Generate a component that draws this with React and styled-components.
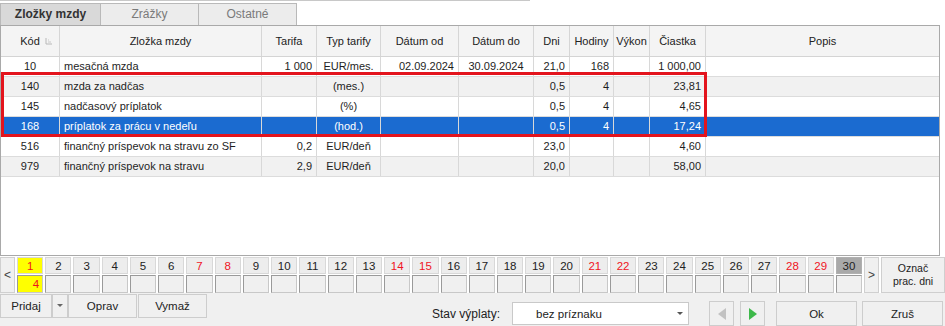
import React from "react";
import styled, { createGlobalStyle, css } from "styled-components";

const GlobalStyle = createGlobalStyle`
  html, body {
    margin: 0;
    padding: 0;
    background: #ffffff;
  }
  body {
    font-family: "Liberation Sans", Arial, sans-serif;
    font-size: 11px;
    color: #1e1e1e;
  }
`;

const Page = styled.div`
  position: relative;
  width: 945px;
  height: 326px;
  overflow: hidden;
  display: flex;
  flex-direction: column;
  background: #ffffff;
`;

// ---------- tabs ----------
const TabBar = styled.div`
  display: flex;
  height: 25px;
  padding-top: 2px;
  box-sizing: border-box;
  border-top: 1px solid #c8c8c8;
  width: 530px;
`;

const Tab = styled.div`
  width: ${(p) => p.$w}px;
  display: flex;
  align-items: center;
  justify-content: center;
  box-sizing: border-box;
  border: 1px solid #b9b9b9;
  border-bottom: none;
  margin-right: -1px;
  font-size: 12px;
  ${(p) =>
    p.$active
      ? css`
          background: #d9d9d9;
          font-weight: bold;
          color: #333;
        `
      : css`
          background: #ececec;
          color: #7a7a7a;
        `}
`;

// ---------- grid ----------
const cols = "59px 202px 55px 64px 78px 75px 36px 44px 36px 56px 1fr";

const Grid = styled.div`
  width: 940px;
  height: 233px;
  box-sizing: border-box;
  border: 1px solid #a9a9a9;
  background: #fff;
  display: flex;
  flex-direction: column;
`;

const HeaderRow = styled.div`
  display: grid;
  grid-template-columns: ${cols};
  height: 30px;
  background: #f4f4f4;
  border-bottom: 1px solid #d4d4d4;
`;

const HeadCell = styled.div`
  position: relative;
  display: flex;
  align-items: center;
  justify-content: center;
  border-right: 1px solid #d6d6d6;
  color: #222;
  &:last-child {
    border-right: none;
  }
`;

const SortMark = styled.svg`
  position: absolute;
  right: 6px;
  top: 11px;
`;

const Row = styled.div`
  display: grid;
  grid-template-columns: ${cols};
  height: 20px;
  box-sizing: border-box;
  border-bottom: 1px solid #dcdcdc;
  background: ${(p) => (p.$selected ? "#1b6bd0" : p.$alt ? "#f1f1f1" : "#fff")};
  color: ${(p) => (p.$selected ? "#fff" : "#1e1e1e")};
`;

const Cell = styled.div`
  display: flex;
  align-items: center;
  justify-content: ${(p) =>
    p.$align === "right" ? "flex-end" : p.$align === "center" ? "center" : "flex-start"};
  padding: 0 4px;
  border-right: 1px solid #d8d8d8;
  white-space: nowrap;
  overflow: hidden;
  &:last-child {
    border-right: none;
  }
`;

const Highlight = styled.div`
  position: absolute;
  left: 1px;
  top: 72px;
  width: 706px;
  height: 65px;
  box-sizing: border-box;
  border: 3px solid #e3141d;
  pointer-events: none;
`;

// ---------- calendar ----------
const Calendar = styled.div`
  display: flex;
  height: 36px;
  margin-top: 1px;
  gap: 2px;
  background: #fff;
`;

const ArrowButton = styled.div`
  width: 15px;
  display: flex;
  align-items: center;
  justify-content: center;
  box-sizing: border-box;
  border: 1px solid #d0d0d0;
  background: #f0f0f0;
  color: #444;
  font-size: 12px;
`;

const DayColumn = styled.div`
  flex: 1;
  display: flex;
  flex-direction: column;
  gap: 1px;
`;

const DayNumber = styled.div`
  height: 17px;
  box-sizing: border-box;
  display: flex;
  align-items: center;
  justify-content: center;
  border: 1px solid ${(p) => (p.$today ? "#b0b0b0" : "#d8d8d8")};
  background: ${(p) => (p.$first ? "#ffff00" : p.$today ? "#a9a9a9" : "#ededed")};
  color: ${(p) => (p.$weekend ? "#f0141e" : "#222")};
  font-size: 11.5px;
`;

const DayValue = styled.div`
  height: 18px;
  box-sizing: border-box;
  display: flex;
  align-items: center;
  justify-content: flex-end;
  padding-right: 3px;
  border: 1px solid #9a9a9a;
  border-right-color: #c8c8c8;
  border-bottom-color: #c8c8c8;
  background: ${(p) => (p.$first ? "#ffff00" : "#f0f0f0")};
  color: #f0141e;
  font-size: 11.5px;
`;

const MarkButton = styled.div`
  width: 64px;
  display: flex;
  align-items: center;
  justify-content: center;
  text-align: center;
  line-height: 13px;
  box-sizing: border-box;
  border: 1px solid #cfcfcf;
  background: #f0f0f0;
  font-size: 10.5px;
  color: #222;
`;

// ---------- bottom bar ----------
const BottomBar = styled.div`
  flex: 1;
  display: flex;
  align-items: flex-start;
  background: #f0f0f0;
  padding-top: 1px;
`;

const Button = styled.div`
  width: ${(p) => p.$w}px;
  height: ${(p) => p.$h || 24}px;
  box-sizing: border-box;
  display: flex;
  align-items: center;
  justify-content: center;
  border: 1px solid #cdcdcd;
  background: #f0f0f0;
  color: #222;
  font-size: 11.5px;
  margin-right: ${(p) => p.$mr || 0}px;
  margin-left: ${(p) => p.$ml || 0}px;
`;

const RightGroup = styled.div`
  margin-left: auto;
  margin-top: 7px;
  display: flex;
  align-items: center;
`;

const Label = styled.div`
  font-size: 12px;
  color: #222;
  margin-right: 0;
  width: 80px;
`;

const Select = styled.div`
  width: 177px;
  height: 23px;
  box-sizing: border-box;
  display: flex;
  align-items: center;
  padding-left: 23px;
  border: 1px solid #c9c9c9;
  background: #fff;
  font-size: 11.5px;
  color: #222;
  position: relative;
  margin-right: 20px;
`;

const SelectArrow = styled.svg`
  position: absolute;
  right: 5px;
  top: 9px;
`;

const columns = [
  "Kód",
  "Zložka mzdy",
  "Tarifa",
  "Typ tarify",
  "Dátum od",
  "Dátum do",
  "Dni",
  "Hodiny",
  "Výkon",
  "Čiastka",
  "Popis",
];

const aligns = ["center", "left", "right", "center", "right", "center", "right", "right", "right", "right", "left"];

const rows = [
  ["10", "mesačná mzda", "1 000", "EUR/mes.", "02.09.2024", "30.09.2024", "21,0", "168", "", "1 000,00", ""],
  ["140", "mzda za nadčas", "", "(mes.)", "", "", "0,5", "4", "", "23,81", ""],
  ["145", "nadčasový príplatok", "", "(%)", "", "", "0,5", "4", "", "4,65", ""],
  ["168", "príplatok za prácu v nedeľu", "", "(hod.)", "", "", "0,5", "4", "", "17,24", ""],
  ["516", "finančný príspevok na stravu zo SF", "0,2", "EUR/deň", "", "", "23,0", "", "", "4,60", ""],
  ["979", "finančný príspevok na stravu", "2,9", "EUR/deň", "", "", "20,0", "", "", "58,00", ""],
];

const weekends = [1, 7, 8, 14, 15, 21, 22, 28, 29];
const days = Array.from({ length: 30 }, (_, i) => i + 1);

function Triangle({ dir, color }) {
  return (
    <svg width="10" height="12" viewBox="0 0 10 12">
      {dir === "left" ? (
        <polygon points="9,0 9,12 1,6" fill={color} />
      ) : (
        <polygon points="1,0 1,12 9,6" fill={color} />
      )}
    </svg>
  );
}

export default function App() {
  return (
    <Page>
      <GlobalStyle />
      <TabBar>
        <Tab $w={101} $active>
          Zložky mzdy
        </Tab>
        <Tab $w={99}>Zrážky</Tab>
        <Tab $w={99}>Ostatné</Tab>
      </TabBar>

      <Grid>
        <HeaderRow>
          {columns.map((c, i) => (
            <HeadCell key={c}>
              {c}
              {i === 0 && (
                <SortMark width="8" height="8" viewBox="0 0 8 8">
                  <path d="M1 1v6h6" stroke="#b8b8b8" fill="none" />
                  <path d="M3 5h3M3 3h1" stroke="#c8c8c8" />
                </SortMark>
              )}
            </HeadCell>
          ))}
        </HeaderRow>
        {rows.map((r, i) => (
          <Row key={r[0]} $alt={i % 2 === 1} $selected={i === 3}>
            {r.map((v, j) => (
              <Cell key={j} $align={aligns[j]}>
                {v}
              </Cell>
            ))}
          </Row>
        ))}
      </Grid>

      <Calendar>
        <ArrowButton>&lt;</ArrowButton>
        {days.map((d) => (
          <DayColumn key={d}>
            <DayNumber $weekend={weekends.includes(d)} $first={d === 1} $today={d === 30}>
              {d}
            </DayNumber>
            <DayValue $first={d === 1}>{d === 1 ? "4" : ""}</DayValue>
          </DayColumn>
        ))}
        <ArrowButton>&gt;</ArrowButton>
        <MarkButton>
          Označ
          <br />
          prac. dni
        </MarkButton>
      </Calendar>

      <BottomBar>
        <Button $w={52}>Pridaj</Button>
        <Button $w={16}>
          <svg width="6" height="4" viewBox="0 0 6 4">
            <polygon points="0,0 6,0 3,3" fill="#666" />
          </svg>
        </Button>
        <Button $w={69} $ml={0}>
          Oprav
        </Button>
        <Button $w={69} $ml={1}>
          Vymaž
        </Button>
        <RightGroup>
          <Label>Stav výplaty:</Label>
          <Select>
            bez príznaku
            <SelectArrow width="6" height="4" viewBox="0 0 6 4">
              <polygon points="0,0 6,0 3,3" fill="#555" />
            </SelectArrow>
          </Select>
          <Button $w={25} $h={25}>
            <Triangle dir="left" color="#c2c2c2" />
          </Button>
          <Button $w={25} $h={25} $ml={6} $mr={11}>
            <Triangle dir="right" color="#3db84a" />
          </Button>
          <Button $w={81} $h={25} $mr={5}>
            Ok
          </Button>
          <Button $w={81} $h={25} $mr={2}>
            Zruš
          </Button>
        </RightGroup>
      </BottomBar>

      <Highlight />
    </Page>
  );
}
